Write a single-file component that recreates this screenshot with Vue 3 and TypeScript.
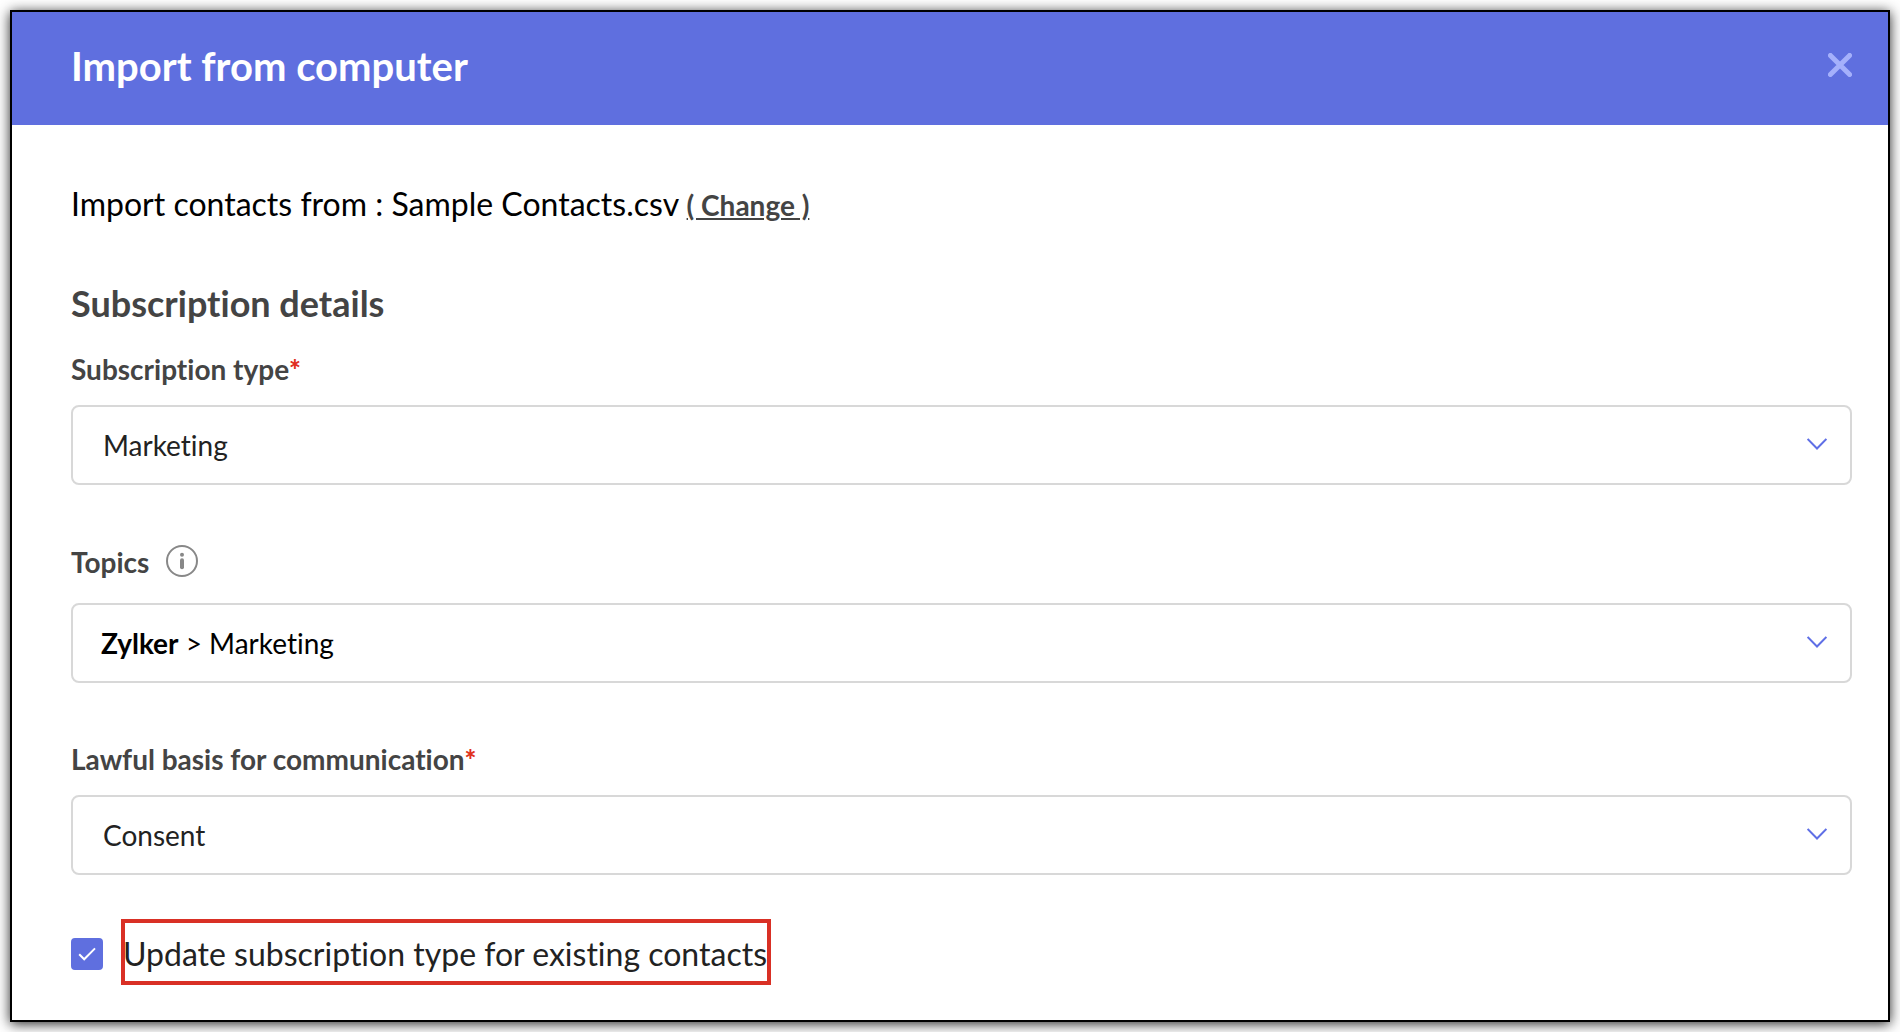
<script setup lang="ts">
import { ref } from 'vue'

const subscriptionType = ref('Marketing')
const lawfulBasis = ref('Consent')
const updateExisting = ref(true)
const types: string[] = ['Marketing', 'Transactional']
const bases: string[] = ['Consent', 'Legitimate interest', 'Contract']
</script>

<template>
  <main class="dialog" role="dialog" aria-labelledby="dialog-title">
    <header class="dialog-header">
      <h1 id="dialog-title">Import from computer</h1>
      <button class="close" type="button" aria-label="Close">
        <svg viewBox="0 0 24 24" width="24" height="24">
          <path d="M2.4 2.4 21.6 21.6M21.6 2.4 2.4 21.6" />
        </svg>
      </button>
    </header>

    <form class="dialog-body" @submit.prevent>
      <p class="source">Import contacts from : Sample Contacts.csv <a href="#">( Change )</a></p>

      <h2>Subscription details</h2>

      <div class="field">
        <label class="field-label" for="sub-type">Subscription type<span class="required">*</span></label>
        <div class="control">
          <select id="sub-type" v-model="subscriptionType">
            <option v-for="t in types" :key="t">{{ t }}</option>
          </select>
          <svg class="chevron" viewBox="0 0 20 12" width="20" height="12">
            <path d="M.6.9 10 10.5 19.4.9" />
          </svg>
        </div>
      </div>

      <div class="field">
        <div class="field-label with-info">
          <label id="topics-label" for="topics">Topics</label>
          <svg class="info" viewBox="0 0 32 32" width="32" height="32" role="img" aria-label="More information">
            <circle class="ring" cx="16" cy="16" r="15" />
            <circle cx="16" cy="9.7" r="2" />
            <rect x="14" y="13.2" width="4" height="11" rx="2" />
          </svg>
        </div>
        <div class="control">
          <button id="topics" class="topics" type="button" aria-haspopup="listbox">
            <b>Zylker</b> &gt; Marketing
          </button>
          <svg class="chevron" viewBox="0 0 20 12" width="20" height="12">
            <path d="M.6.9 10 10.5 19.4.9" />
          </svg>
        </div>
      </div>

      <div class="field">
        <label class="field-label" for="basis">Lawful basis for communication<span class="required">*</span></label>
        <div class="control">
          <select id="basis" v-model="lawfulBasis">
            <option v-for="b in bases" :key="b">{{ b }}</option>
          </select>
          <svg class="chevron" viewBox="0 0 20 12" width="20" height="12">
            <path d="M.6.9 10 10.5 19.4.9" />
          </svg>
        </div>
      </div>

      <div class="update">
        <span class="tick">
          <input id="update-existing" v-model="updateExisting" type="checkbox" />
          <svg v-if="updateExisting" viewBox="0 0 32 32" width="32" height="32">
            <path d="M8.2 16.2 13.2 21.3 24 10.4" />
          </svg>
        </span>
        <label class="highlight" for="update-existing">Update subscription type for existing contacts</label>
      </div>
    </form>
  </main>
</template>

<style>
body {
  margin: 0;
  background: #fff;
}

#app {
  display: flow-root;
}
</style>

<style scoped>
.dialog {
  margin: 10px;
  border: 2px solid #000;
  background: #fff;
  box-shadow: 0 2px 12px rgba(0, 0, 0, 0.85);
  font-family: Lato, "Liberation Sans", sans-serif;
  font-size: 28px;
  line-height: 32px;
  font-variant-ligatures: none;
  color: #000;
}

.dialog-header {
  display: flex;
  align-items: flex-start;
  justify-content: space-between;
  padding: 30px 36px 35px 59px;
  background: #5f6fdf;
}

h1 {
  margin: 0;
  font-size: 40px;
  line-height: 48px;
  font-weight: 700;
  color: #fff;
}

.close {
  display: flex;
  align-items: center;
  height: 46px;
  padding: 0;
  border: 0;
  background: none;
  cursor: pointer;
}

.close path {
  fill: none;
  stroke: #a5b0fb;
  stroke-width: 5;
  stroke-linecap: round;
}

.dialog-body {
  padding: 59px 36px 37px 59px;
}

.source {
  margin: 0;
  font-size: 32px;
  line-height: 40px;
}

.source a {
  font-size: 28px;
  line-height: 32px;
  font-weight: 700;
  color: #444;
  text-decoration: underline;
}

h2 {
  margin: 57px 0 28px;
  font-size: 36px;
  line-height: 44px;
  font-weight: 700;
  color: #444;
}

.field + .field {
  margin-top: 60px;
}

.field-label {
  display: block;
  margin-bottom: 20px;
  font-weight: 700;
  color: #444;
}

.with-info {
  display: flex;
  align-items: flex-start;
  gap: 17px;
  padding-bottom: 4px;
  line-height: 34px;
}

.required {
  font-weight: 900;
  color: #e03020;
}

.info {
  fill: #888;
}

.info .ring {
  fill: none;
  stroke: #888;
  stroke-width: 2;
}

.control {
  position: relative;
}

.control select,
.topics {
  display: block;
  box-sizing: border-box;
  width: 100%;
  height: 80px;
  padding: 0 64px 0 30px;
  border: 2px solid #d8d8d8;
  border-radius: 8px;
  background: #fff;
  font: inherit;
  font-variant-ligatures: none;
  color: #222;
  text-align: left;
  appearance: none;
}

.topics {
  padding-left: 28px;
  color: #000;
}

.chevron {
  position: absolute;
  top: 33px;
  right: 25px;
  pointer-events: none;
}

.chevron path {
  fill: none;
  stroke: #5f6fe6;
  stroke-width: 2;
}

.update {
  display: flex;
  align-items: center;
  gap: 20px;
  margin-top: 46px;
}

.tick {
  position: relative;
  display: flex;
  margin-top: 4px;
}

.tick input {
  width: 32px;
  height: 32px;
  margin: 0;
  border: 2px solid #5f6fdf;
  border-radius: 4px;
  appearance: none;
}

.tick input:checked {
  background: #5f6fdf;
}

.tick svg {
  position: absolute;
  inset: 0;
  pointer-events: none;
}

.tick path {
  fill: none;
  stroke: #fff;
  stroke-width: 2;
}

.highlight {
  padding: 13px 2px 9px 0;
  outline: 4px solid #d93025;
  outline-offset: -2px;
  font-size: 32px;
  line-height: 40px;
  color: #222;
}
</style>
